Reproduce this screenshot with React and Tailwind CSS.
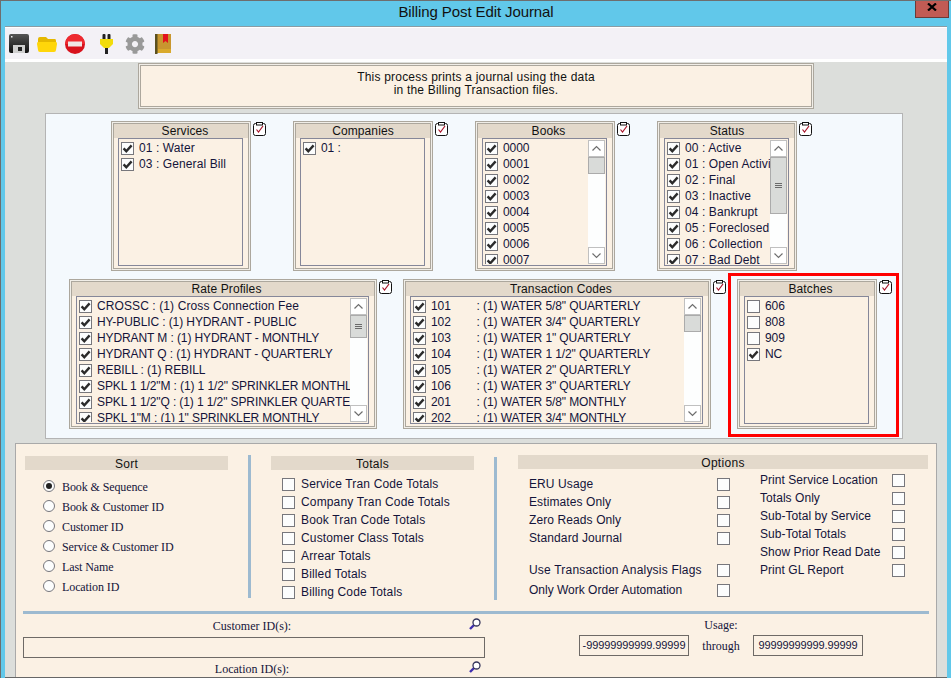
import { FaCog } from 'react-icons/fa'

const SANS = "font-['Liberation_Sans',Arial,sans-serif]"
const SERIF = "font-['Liberation_Serif','Times_New_Roman',serif]"

const SERVICES = ['01 : Water', '03 : General Bill']
const BOOKS = ['0000', '0001', '0002', '0003', '0004', '0005', '0006', '0007']
const STATUS = ['00 : Active', '01 : Open Activity', '02 : Final', '03 : Inactive', '04 : Bankrupt', '05 : Foreclosed', '06 : Collection', '07 : Bad Debt']
const RATES = [
  'CROSSC : (1) Cross Connection Fee',
  'HY-PUBLIC : (1) HYDRANT - PUBLIC',
  'HYDRANT M : (1) HYDRANT - MONTHLY',
  'HYDRANT Q : (1) HYDRANT - QUARTERLY',
  'REBILL : (1) REBILL',
  'SPKL 1 1/2"M : (1) 1 1/2" SPRINKLER MONTHLY',
  'SPKL 1 1/2"Q : (1) 1 1/2" SPRINKLER QUARTERLY',
  'SPKL 1"M : (1) 1" SPRINKLER MONTHLY',
]
const TRAN_CODES = [
  '101        : (1) WATER 5/8" QUARTERLY',
  '102        : (1) WATER 3/4" QUARTERLY',
  '103        : (1) WATER 1" QUARTERLY',
  '104        : (1) WATER 1 1/2" QUARTERLY',
  '105        : (1) WATER 2" QUARTERLY',
  '106        : (1) WATER 3" QUARTERLY',
  '201        : (1) WATER 5/8" MONTHLY',
  '202        : (1) WATER 3/4" MONTHLY',
]
const SORTS = ['Book & Sequence', 'Book & Customer ID', 'Customer ID', 'Service & Customer ID', 'Last Name', 'Location ID']
const TOTALS = ['Service Tran Code Totals', 'Company Tran Code Totals', 'Book Tran Code Totals', 'Customer Class Totals', 'Arrear Totals', 'Billed Totals', 'Billing Code Totals']
const OPTIONS_A = ['ERU Usage', 'Estimates Only', 'Zero Reads Only', 'Standard Journal']
const OPTIONS_B = ['Print Service Location', 'Totals Only', 'Sub-Total by Service', 'Sub-Total Totals', 'Show Prior Read Date', 'Print GL Report']

function Check({ checked }) {
  return (
    <span className="block w-[13px] h-[13px] shrink-0 border border-[#77777c] bg-[#fcfdfd]">
      {checked && (
        <svg viewBox="0 0 11 11" className="w-[11px] h-[11px]">
          <path d="M1.6 5.4 L4.3 8.2 L9.6 2.4" fill="none" stroke="#2b2b2b" strokeWidth="2.4" />
        </svg>
      )}
    </span>
  )
}

function Clipboard() {
  return (
    <svg viewBox="0 0 13 14" className="w-[13px] h-[14px] shrink-0 ml-[2px] mt-px">
      <rect x="0.5" y="1.5" width="12" height="12" rx="2" fill="#fff" stroke="#111" />
      <rect x="3.5" y="0.5" width="6" height="2.5" fill="#fff" stroke="#111" />
      <path d="M3.5 7.5 L5.5 10 L10 4" fill="none" stroke="#a8142a" strokeWidth="1.2" />
    </svg>
  )
}

function Chevron({ up }) {
  return (
    <svg viewBox="0 0 15 15" className="w-[15px] h-[15px]">
      <path d={up ? 'M3.5 9.5 L7.5 5.5 L11.5 9.5' : 'M3.5 5.5 L7.5 9.5 L11.5 5.5'} fill="none" stroke="#6e6e6e" strokeWidth="1.2" />
    </svg>
  )
}

function Scrollbar({ thumb, grip }) {
  return (
    <div className="w-[17px] shrink-0 flex flex-col bg-[#fdfefe]">
      <div className="h-[17px] border border-[#c0c0c0] bg-white"><Chevron up /></div>
      <div className="flex-1">
        <div
          className="border border-[#ababab] bg-[#d9dbd9] flex flex-col items-center justify-center gap-px"
          style={{ height: thumb }}
        >
          {grip && [0, 1, 2].map(i => <span key={i} className="block w-[7px] h-px bg-[#6a6a6a]" />)}
        </div>
      </div>
      <div className="h-[17px] border border-[#c0c0c0] bg-white"><Chevron /></div>
    </div>
  )
}

function ListBox({ title, titleShift = '', items, checked, width = 'w-[140px]', thumb, grip }) {
  return (
    <div className={`${width} h-[150px] shrink-0 border border-[#aca79d] p-px bg-[#f1eee8]`}>
      <div className="h-full border border-[#aca79d] bg-[#fbf1e4] flex flex-col">
        <div className={`h-[14px] shrink-0 bg-[#e3d9cb] text-center text-[12px] leading-[14px] text-[#111] tracking-[0.1px] ${titleShift} ${SANS}`}>
          {title}
        </div>
        <div className="h-[128px] ml-1 mr-[5px] border border-[#858799] flex p-px overflow-hidden">
          <div className="flex-1 min-w-0 overflow-hidden pl-px">
            {items.map(item => (
              <div key={item} className="h-4 flex items-center gap-[5px]">
                <Check checked={checked ? checked(item) : true} />
                <span className={`whitespace-pre text-[12px] text-[#14143a] ${/[a-z]/.test(item) ? 'tracking-[0.1px]' : 'tracking-[-0.1px]'} ${SANS}`}>{item}</span>
              </div>
            ))}
          </div>
          {thumb && <Scrollbar thumb={thumb} grip={grip} />}
        </div>
      </div>
    </div>
  )
}

function Heading({ children }) {
  return (
    <div className={`h-[14px] pt-px bg-[#e3d9cb] text-center text-[12px] leading-[14px] text-[#111] tracking-[0.3px] ${SANS}`}>
      {children}
    </div>
  )
}

function Magnifier() {
  return (
    <svg viewBox="0 0 12 12" className="w-3 h-3 shrink-0">
      <path d="M1 11 L5 7" stroke="#3f2fb0" strokeWidth="2.4" />
      <circle cx="7.5" cy="4.5" r="3.5" fill="#fff" stroke="#34345a" strokeWidth="1.3" />
    </svg>
  )
}

function Toolbar() {
  return (
    <div className="h-[35px] border-t border-b-[3px] border-white bg-[#f3f1f6] flex items-center pl-1">
      <svg viewBox="0 0 20 20" className="w-5 h-5 shrink-0">
        <defs>
          <linearGradient id="disk" x1="0" y1="0" x2="0" y2="1">
            <stop offset="0" stopColor="#555" />
            <stop offset="1" stopColor="#111" />
          </linearGradient>
        </defs>
        <rect width="20" height="19" rx="2" fill="url(#disk)" />
        <rect x="2" y="2" width="1.5" height="1.5" fill="#eee" />
        <rect x="4" y="11" width="12" height="8" fill="#cfcfcf" />
        <rect x="9" y="13" width="4" height="4" fill="#222" />
      </svg>
      <svg viewBox="0 0 20 16" className="w-5 h-4 shrink-0 ml-2">
        <path d="M3 1 H9 L11 3 H18 Q19 3 19 5 V7 H1 V3 Q1 1 3 1 Z" fill="#e5b800" />
        <path d="M1 6 H19 Q20 6 20 8 L19 14 Q19 16 17 16 H3 Q1 16 1 14 L0 8 Q0 6 1 6 Z" fill="#ffd60a" />
      </svg>
      <svg viewBox="0 0 20 20" className="w-5 h-5 shrink-0 ml-2">
        <circle cx="10" cy="10" r="10" fill="#d8121c" />
        <path d="M10 0 A10 10 0 0 1 20 10 H0 A10 10 0 0 1 10 0 Z" fill="#ee2a30" />
        <rect x="3" y="7.5" width="14" height="5" fill="#f0e6e6" />
      </svg>
      <svg viewBox="0 0 13 20" className="w-[13px] h-5 shrink-0 ml-[15px]">
        <rect x="2.5" y="0" width="3" height="6" rx="1" fill="#222" />
        <rect x="7.5" y="0" width="3" height="6" rx="1" fill="#222" />
        <path d="M0 5 H13 V10 L9 14 H4 L0 10 Z" fill="#f2dc0a" />
        <rect x="5" y="14" width="3" height="6" fill="#222" />
      </svg>
      <FaCog className="w-5 h-5 shrink-0 ml-3 text-[#999]" />
      <svg viewBox="0 0 16 20" className="w-4 h-5 shrink-0 ml-[10px]">
        <rect width="16" height="19" fill="#c8962f" />
        <rect width="2.5" height="20" fill="#5b5020" />
        <rect x="3" y="15" width="13" height="4" fill="#d9a92c" />
        <path d="M8 0 H13 V9 L10.5 7 L8 9 Z" fill="#e3121c" />
      </svg>
    </div>
  )
}

export default function App() {
  return (
    <div className="w-[951px] h-[678px] overflow-hidden flex flex-col border-t border-l border-[#6e6e6e] bg-[#61c8ea]">
      <div className="relative h-[25px] shrink-0 flex items-center justify-center pb-[2px]">
        <span className={`text-[15px] text-[#111] tracking-[-0.1px] ${SANS}`}>Billing Post Edit Journal</span>
        <div className="absolute right-[2px] -top-px w-[34px] h-[18px] bg-[#c15b54] border border-[#6b3b38] flex justify-center pt-[2px]">
          <svg viewBox="0 0 10 8" className="w-[10px] h-2">
            <path d="M1 0.5 L9 7.5 M9 0.5 L1 7.5" stroke="#000" strokeWidth="2.2" />
          </svg>
        </div>
      </div>

      <div className="flex-1 min-h-0 w-[942px] ml-1 bg-[#dcdedb] border-t border-b border-t-[#8b9ca4] border-b-[#666] overflow-hidden">
        <Toolbar />

        <div className="w-[676px] h-[46px] mt-px ml-[133px] border border-[#aca79d] p-px bg-[#f1eee8]">
          <div className={`h-full border border-[#aca79d] bg-[#fbf1e4] pt-[5px] text-center text-[12px] leading-[13px] text-[#111] tracking-[0.2px] ${SANS}`}>
            <p>This process prints a journal using the data</p>
            <p>in the Billing Transaction files.</p>
          </div>
        </div>

        <div className="w-[858px] h-[326px] mt-1 ml-10 border border-[#b4b4b4] bg-[#f4f9fd] pt-[7px]">
          <div className="flex items-start ml-[65px] gap-[27px]">
            <div className="flex items-start"><ListBox title="Services" titleShift="pl-2" items={SERVICES} /><Clipboard /></div>
            <div className="flex items-start"><ListBox title="Companies" items={['01 :']} /><Clipboard /></div>
            <div className="flex items-start"><ListBox title="Books" titleShift="pl-[7px]" items={BOOKS} thumb={17} /><Clipboard /></div>
            <div className="flex items-start"><ListBox title="Status" items={STATUS} thumb={57} grip /><Clipboard /></div>
          </div>
          <div className="flex items-start ml-[23px] mt-2">
            <ListBox title="Rate Profiles" titleShift="pl-[7px]" items={RATES} width="w-[308px]" thumb={23} grip />
            <Clipboard />
            <div className="ml-[11px] flex items-start">
              <ListBox title="Transaction Codes" titleShift="pl-2" items={TRAN_CODES} width="w-[308px]" thumb={17} />
              <Clipboard />
            </div>
            <div className="relative ml-[11px] flex items-start">
              <ListBox title="Batches" titleShift="pl-[7px]" items={['606', '808', '909', 'NC']} checked={b => b === 'NC'} />
              <Clipboard />
              <div className="absolute -left-[9px] -top-[6px] w-[171px] h-[164px] border-[3px] border-[#ff0000]" />
            </div>
          </div>
        </div>

        <div className="w-[922px] h-[240px] mt-1 ml-[10px] border border-[#a9a9a9] bg-[#fbf1e4]">
          <div className="h-[167px] flex items-start">
            <div className="w-[203px] ml-[9px] mt-3">
              <Heading>Sort</Heading>
              <div className="mt-[6px] ml-[18px]">
                {SORTS.map((s, i) => (
                  <div key={s} className="h-5 flex items-center gap-[7px]">
                    <span className="w-3 h-3 -mt-px rounded-full border border-[#77777c] bg-[#fcfdfd] flex items-center justify-center">
                      {i === 0 && <span className="block w-[6px] h-[6px] rounded-full bg-[#222]" />}
                    </span>
                    <span className={`mt-px text-[12px] text-[#14143a] tracking-[-0.1px] ${SERIF}`}>{s}</span>
                  </div>
                ))}
              </div>
            </div>
            <div className="w-[3px] h-[143px] ml-5 mt-[11px] bg-[#9dbad0]" />

            <div className="w-[203px] ml-5 mt-3">
              <Heading>Totals</Heading>
              <div className="mt-[5px] ml-[11px]">
                {TOTALS.map(t => (
                  <div key={t} className="h-[18px] flex items-center gap-[6px]">
                    <Check />
                    <span className={`text-[12px] text-[#14143a] tracking-[0.15px] ${SANS}`}>{t}</span>
                  </div>
                ))}
              </div>
            </div>
            <div className="w-[3px] h-[143px] ml-5 mt-[13px] bg-[#9dbad0]" />

            <div className="w-[410px] ml-[21px] mt-[11px]">
              <Heading>Options</Heading>
              <div className="flex ml-[11px]">
                <div className="w-[201px] mt-[6px]">
                  {OPTIONS_A.map(o => (
                    <div key={o} className="h-[18px] flex items-center justify-between">
                      <span className={`text-[12px] text-[#14143a] tracking-[0.1px] ${SANS}`}>{o}</span>
                      <Check />
                    </div>
                  ))}
                  <div className="h-[18px] mt-[14px] flex items-center justify-between">
                    <span className={`text-[12px] text-[#14143a] tracking-[0.2px] ${SANS}`}>Use Transaction Analysis Flags</span>
                    <Check />
                  </div>
                  <div className="h-[18px] mt-[2px] flex items-center justify-between">
                    <span className={`text-[12px] text-[#14143a] ${SANS}`}>Only Work Order Automation</span>
                    <Check />
                  </div>
                </div>
                <div className="w-[145px] ml-[30px] mt-[2px]">
                  {OPTIONS_B.map(o => (
                    <div key={o} className="h-[18px] flex items-center justify-between">
                      <span className={`text-[12px] text-[#14143a] tracking-[0.05px] ${SANS}`}>{o}</span>
                      <Check />
                    </div>
                  ))}
                </div>
              </div>
            </div>
          </div>

          <div className="w-[906px] h-[3px] ml-[7px] bg-[#9dbad0]" />

          <div className="flex items-start ml-[7px]">
            <div className="w-[462px]">
              <div className={`h-[23px] flex items-center text-[12px] text-[#14143a] ${SERIF}`}>
                <span className="flex-1" />
                <span className="mt-px">Customer ID(s):</span>
                <span className="flex-1 flex justify-end pr-1 -mt-1"><Magnifier /></span>
              </div>
              <div className="h-[21px] border border-[#6e6a66]" />
              <div className={`h-[22px] flex items-center text-[12px] text-[#14143a] ${SERIF}`}>
                <span className="flex-1" />
                <span>Location ID(s):</span>
                <span className="flex-1 flex justify-end pr-1 -mt-1"><Magnifier /></span>
              </div>
            </div>
            <div className="w-[284px] ml-[94px]">
              <div className={`h-[21px] flex items-center justify-center text-[12px] text-[#14143a] ${SERIF}`}>Usage:</div>
              <div className="flex items-center">
                <div className={`w-[110px] h-[21px] border border-[#6e6a66] text-center text-[11px] leading-[19px] text-[#14143a] tracking-[-0.1px] ${SANS}`}>-99999999999.99999</div>
                <div className={`flex-1 text-center text-[12px] text-[#14143a] ${SERIF}`}>through</div>
                <div className={`w-[110px] h-[21px] border border-[#6e6a66] text-center text-[11px] leading-[19px] text-[#14143a] tracking-[-0.1px] ${SANS}`}>99999999999.99999</div>
              </div>
            </div>
          </div>
        </div>
      </div>
    </div>
  )
}
